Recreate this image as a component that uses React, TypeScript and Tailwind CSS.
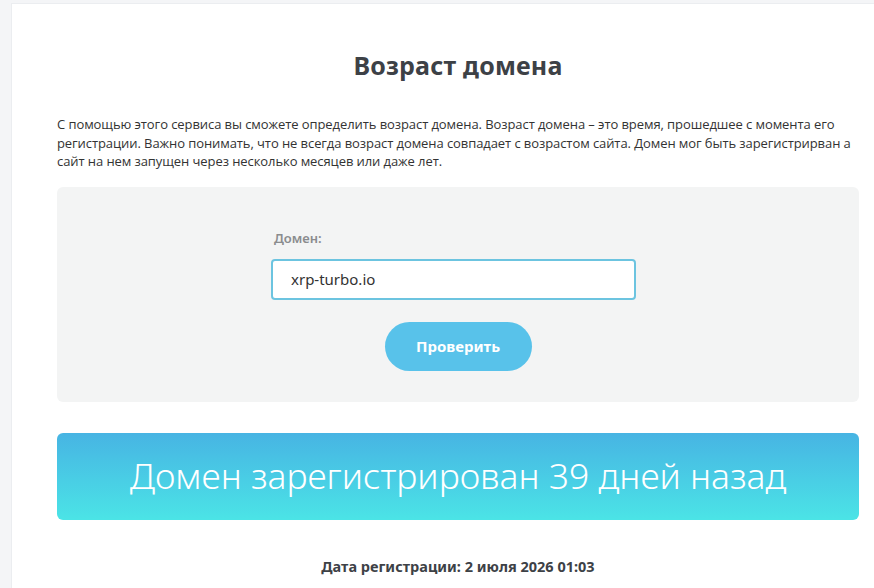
import React, { useState } from 'react';

const App: React.FC = () => {
  const [domain, setDomain] = useState('xrp-turbo.io');

  return (
    <div className="min-h-[588px] w-[874px] overflow-hidden bg-[#f4f5f7] pt-[3px]">
      <div
        className="ml-[11px] w-[894px] min-h-[600px] border border-[#ebedf0] bg-white px-[45px] pt-[47px]"
        style={{ fontFamily: '"Noto Sans", "Open Sans", sans-serif' }}
      >
        <h1 className="text-center text-[25px] font-bold leading-[28px] tracking-[0.2px] text-[#3d4146]">
          Возраст домена
        </h1>

        <p
          className="mt-[36px] text-[13px] leading-[18.6px] tracking-[-0.08px] text-[#333]"
          style={{ fontFamily: '"Open Sans", "Noto Sans", sans-serif' }}
        >
          <span className="block whitespace-nowrap">
            С помощью этого сервиса вы сможете определить возраст домена. Возраст домена – это время, прошедшее с момента его
          </span>
          <span className="block whitespace-nowrap">
            регистрации. Важно понимать, что не всегда возраст домена совпадает с возрастом сайта. Домен мог быть зарегистрирван а
          </span>
          <span className="block whitespace-nowrap">сайт на нем запущен через несколько месяцев или даже лет.</span>
        </p>

        {/* форма проверки */}
        <div className="mt-[16px] h-[215px] rounded-md bg-[#f3f4f4] pt-[42px]">
          <div className="ml-[214px] w-[365px]">
            <label className="ml-[3px] block text-[13px] font-semibold leading-[18px] text-[#8a8c8e]">
              Домен:
            </label>
            <input
              value={domain}
              onChange={(e) => setDomain(e.target.value)}
              className="mt-[12px] block h-[41px] w-[365px] rounded-[4px] border-2 border-[#6cc4e0] bg-white px-[18px] text-[15px] text-[#333] outline-none"
            />
          </div>
          <div className="mt-[22px] flex justify-center">
            <button className="h-[49px] w-[147px] rounded-full bg-[#58c2ea] text-[15px] font-bold text-white">
              Проверить
            </button>
          </div>
        </div>

        {/* результат */}
        <div className="mt-[31px] flex h-[87px] items-center justify-center rounded-md bg-gradient-to-b from-[#47b4e3] to-[#4be4e6]">
          <span className="pb-[2px] text-[35.5px] font-light text-white">
            Домен зарегистрирован 39 дней назад
          </span>
        </div>

        <div className="mt-[36px] text-center text-[14.5px] font-bold leading-[20px] text-[#3d4146]">
          Дата регистрации: 2 июля 2026 01:03
        </div>
      </div>
    </div>
  );
};

export default App;
